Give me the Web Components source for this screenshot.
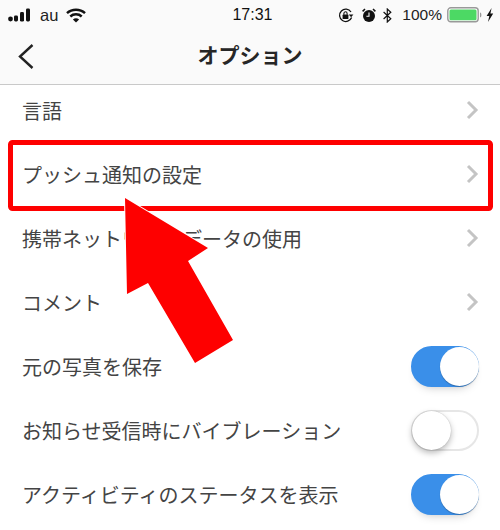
<!DOCTYPE html>
<html lang="ja">
<head>
<meta charset="utf-8">
<title>オプション</title>
<style>
	html, body { margin: 0; padding: 0; background: #fff; }
	body {
		width: 500px;
		height: 530px;
		overflow: hidden;
		position: relative;
		font-family: "Liberation Sans", "Noto Sans CJK JP", sans-serif;
		color: #333;
	}
</style>
</head>
<body>
	<status-bar></status-bar>
	<nav-bar>オプション</nav-bar>
	<option-list>
		<option-row kind="link">言語</option-row>
		<option-row kind="link">プッシュ通知の設定</option-row>
		<option-row kind="link">携帯ネットワークデータの使用</option-row>
		<option-row kind="link">コメント</option-row>
		<option-row kind="on">元の写真を保存</option-row>
		<option-row kind="off">お知らせ受信時にバイブレーション</option-row>
		<option-row kind="on">アクティビティのステータスを表示</option-row>
	</option-list>
	<red-callout></red-callout>

<script>
class StatusBar extends HTMLElement {
	constructor() {
		super();
		this.attachShadow({ mode: 'open' });
		this.shadowRoot.innerHTML = `
			<style>
				:host {
					display: grid;
					grid-template-columns: 1fr auto 1fr;
					align-items: center;
					height: 30px;
					padding: 0 6px 0 8px;
					box-sizing: border-box;
					background: #fafafa;
					color: #111;
				}
				.left, .right { display: flex; align-items: center; }
				.right { justify-content: flex-end; }
				.carrier { margin: 0 8px 0 9px; color: #222; font-size: 16.5px; }
				.time { font-size: 16px; margin-left: 3px; }
				.pct { margin: 0 5px 0 10px; font-size: 15.5px; color: #222; }
				svg { display: block; }
			</style>
			<div class="left">
				<svg width="23" height="14" viewBox="0 0 23 14">
					<circle cx="2.5" cy="11" r="2.4" fill="#111"/>
					<rect x="6" y="7.5" width="4" height="6" rx="1.4" fill="#111"/>
					<rect x="12" y="4" width="4" height="9.6" rx="1.4" fill="#111"/>
					<rect x="18" y="0.5" width="4" height="13" rx="1.4" fill="#111"/>
				</svg>
				<span class="carrier">au</span>
				<svg width="20" height="15" viewBox="0 0 20 15" fill="none" stroke="#111" stroke-width="2.5">
					<path d="M1 5.2C6 .6 14 .6 19 5.2"/>
					<path d="M4.3 8.5C7.5 5.6 12.5 5.6 15.7 8.5"/>
					<path d="M10 14.6 6.9 11.4C8.7 9.9 11.3 9.9 13.1 11.4Z" fill="#111" stroke="none"/>
				</svg>
			</div>
			<div class="time">17:31</div>
			<div class="right">
				<svg width="16" height="15" viewBox="0 0 16 15" fill="none" stroke="#111" style="margin-right:8px">
					<path d="M13 4A6.2 6.2 0 1 0 13.6 9.5" stroke-width="1.3"/>
					<path d="M10.8 6.4h4.6l-2.3 2.8z" fill="#111" stroke="none"/>
					<rect x="4.6" y="6.6" width="5.8" height="4.4" rx=".6" fill="#111" stroke="none"/>
					<path d="M5.9 6.8V5.4a1.6 1.6 0 0 1 3.2 0v1.4" stroke-width="1.1"/>
				</svg>
				<svg width="14" height="15" viewBox="0 0 14 15" style="margin-right:7px">
					<circle cx="7" cy="8" r="6" fill="#111"/>
					<path d="M7 4.5V8.2H4.4" fill="none" stroke="#fff" stroke-width="1.1"/>
					<path d="M.6 3.4 3 1M13.4 3.4 11 1" stroke="#111" stroke-width="1.5"/>
				</svg>
				<svg width="9" height="15" viewBox="0 0 9 15" fill="none" stroke="#111" stroke-width="1.2">
					<path d="M.6 4 7.8 10.8 4.3 14V1l3.5 3.2L.6 11"/>
				</svg>
				<span class="pct">100%</span>
				<svg width="47" height="16" viewBox="0 0 47 16">
					<rect x=".8" y=".8" width="30.4" height="14" rx="3" fill="none" stroke="#999" stroke-width="1.4"/>
					<rect x="2.5" y="2.5" width="27" height="10.8" rx="1.5" fill="#4cd964"/>
					<path d="M33 5.5c1 .2 1.4 1 1.4 2.4s-.4 2.2-1.4 2.4z" fill="#999"/>
					<path d="M44.6 1 39.6 9h2.7L41 15l5.2-8.4h-2.8z" fill="#111"/>
				</svg>
			</div>
		`;
	}
}

class NavBar extends HTMLElement {
	constructor() {
		super();
		this.attachShadow({ mode: 'open' });
		this.shadowRoot.innerHTML = `
			<style>
				:host {
					display: flex;
					align-items: center;
					justify-content: center;
					position: relative;
					height: 55px;
					box-sizing: border-box;
					padding-bottom: 7px;
					background: #fafafa;
					border-bottom: 1px solid #c9c9c9;
					color: #262626;
					font-size: 21px;
					font-weight: 700;
					font-family: "Noto Sans CJK JP", sans-serif;
				}
				svg { position: absolute; left: 17px; top: 13px; }
			</style>
			<svg width="18" height="26" viewBox="0 0 18 26" fill="none" stroke="#222" stroke-width="2.4">
				<path d="M15.5 2 3 13.5 15.5 25"/>
			</svg>
			<slot></slot>
		`;
	}
}

class OptionList extends HTMLElement {
	constructor() {
		super();
		this.attachShadow({ mode: 'open' });
		this.shadowRoot.innerHTML = `
			<style>
				:host { display: flex; flex-direction: column; margin-top: -7px; }
			</style>
			<slot></slot>
		`;
	}
}

class OptionRow extends HTMLElement {
	constructor() {
		super();
		this.attachShadow({ mode: 'open' });
		const kind = this.getAttribute('kind');
		const tail = kind === 'link'
			? `<svg class="chevron" width="13" height="20" viewBox="0 0 13 20" fill="none" stroke="#c4c4c4" stroke-width="3">
					<path d="M2 2 10 10 2 18"/>
				</svg>`
			: `<toggle-switch ${kind === 'on' ? 'checked' : ''}></toggle-switch>`;
		this.shadowRoot.innerHTML = `
			<style>
				:host {
					display: flex;
					align-items: center;
					justify-content: space-between;
					height: 64px;
					padding: 0 22px;
					box-sizing: border-box;
					font-family: "Noto Sans CJK JP", sans-serif;
					font-size: 20px;
					color: #444;
				}
				:host([kind="on"]), :host([kind="off"]) { padding-right: 21px; }
				.chevron { margin-right: -1px; }
			</style>
			<span><slot></slot></span>
			${tail}
		`;
	}
}

class ToggleSwitch extends HTMLElement {
	constructor() {
		super();
		this.attachShadow({ mode: 'open' });
		this.shadowRoot.innerHTML = `
			<style>
				:host {
					display: block;
					position: relative;
					width: 68px;
					height: 41px;
					box-sizing: border-box;
					border-radius: 21px;
					background: #fff;
					border: 2px solid #e6e6e6;
				}
				:host([checked]) {
					background: #3a8fe9;
					border-color: #3a8fe9;
					box-shadow: 0 6px 10px -6px rgba(0,0,0,.25);
				}
				.knob {
					position: absolute;
					left: -1px;
					top: -1px;
					width: 39px;
					height: 39px;
					border-radius: 50%;
					background: #fff;
					box-shadow: 0 3px 6px rgba(0,0,0,.28), 0 0 1px rgba(0,0,0,.3);
				}
				:host([checked]) .knob {
					left: 27px;
					box-shadow: 0 1px 1px rgba(0,0,0,.25);
				}
			</style>
			<div class="knob"></div>
		`;
	}
}

// Red box and arrow painted over the list
class RedCallout extends HTMLElement {
	constructor() {
		super();
		this.attachShadow({ mode: 'open' });
		this.shadowRoot.innerHTML = `
			<style>
				:host { position: absolute; left: 0; top: 0; width: 500px; height: 530px; pointer-events: none; }
				svg { display: block; }
			</style>
			<svg width="500" height="530" viewBox="0 0 500 530">
				<rect x="10.5" y="142.5" width="480" height="66" rx="2" fill="none" stroke="#fe0000" stroke-width="5"/>
				<polygon points="125,198 208,248 188,261 233,340 195,363 148,283 127,294" fill="#fe0000" stroke="#fff" stroke-width="2" paint-order="stroke"/>
			</svg>
		`;
	}
}

customElements.define('status-bar', StatusBar);
customElements.define('nav-bar', NavBar);
customElements.define('option-list', OptionList);
customElements.define('option-row', OptionRow);
customElements.define('toggle-switch', ToggleSwitch);
customElements.define('red-callout', RedCallout);
</script>
</body>
</html>
